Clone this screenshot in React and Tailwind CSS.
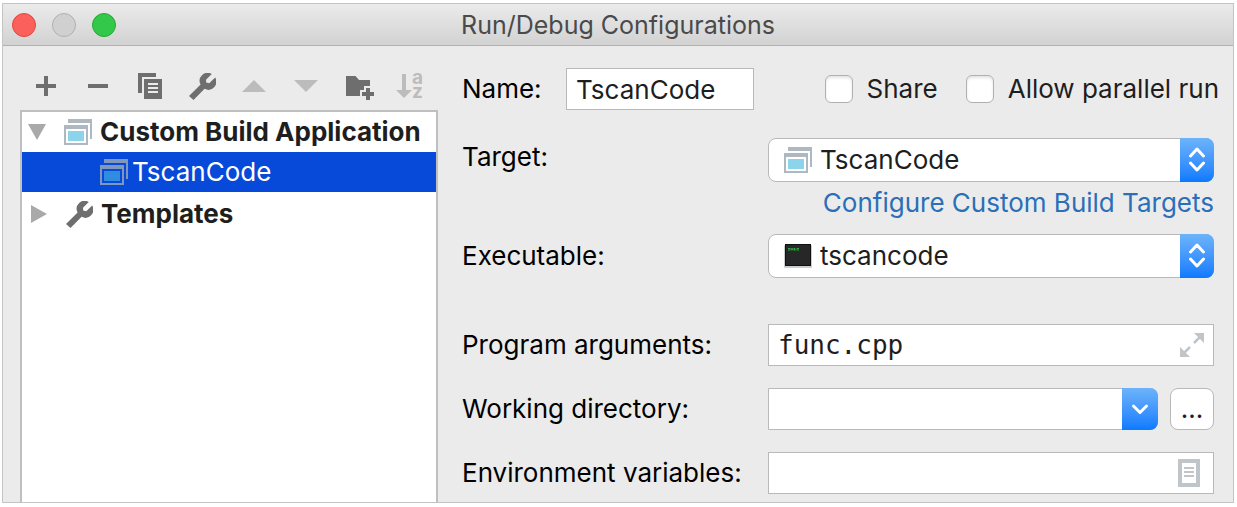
import React from "react";

function Wrench() {
  return (
    <svg width="27" height="27" viewBox="0 0 27 27" fill="#6e6e6e" aria-hidden="true">
      <path d="M0 23 L11.6 11.6 A8 8 0 0 1 22.8 1 L17 6.8 L17.2 9.6 L20.2 10.2 L26.2 4.6 A8 8 0 0 1 15.6 15.8 L4.5 27 Z" />
    </svg>
  );
}

function BuildIcon({ selected = false }) {
  const frame = selected ? "#7f96bd" : "#adb8c0";
  const fill = selected ? "#2f8ce0" : "#8cd3ec";
  return (
    <svg className="shrink-0" width="28" height="26" viewBox="0 0 28 26" aria-hidden="true">
      <path d="M4 0H28V20H26V4H4Z" fill={frame} />
      <path d="M0 6H24V26H0ZM2 10V24H22V10Z" fill={frame} fillRule="evenodd" />
      <rect x="4" y="12" width="16" height="10" fill={fill} />
    </svg>
  );
}

function TerminalIcon() {
  return (
    <svg className="shrink-0" width="28" height="26" viewBox="0 0 28 26" aria-hidden="true">
      <rect x="0" y="2" width="28" height="23" rx="1" fill="#c9ced1" />
      <rect x="1" y="1" width="26" height="22" fill="#101010" />
      <rect x="2" y="2" width="24" height="20" fill="#272727" />
      <path d="M4 5.5h2M4 7h2M7 5v2.500M9 5v2.500M7 6h2M10.500 5v2.500M12 5.500v2M13 5.500h2M13 7h2" stroke="#2fae46" strokeWidth="1" />
    </svg>
  );
}

const tools = [
  {
    label: "Add",
    icon: <svg width="20" height="20" fill="#6e6e6e"><path d="M8 0h4v8h8v4h-8v8H8v-8H0V8h8z" /></svg>,
  },
  {
    label: "Remove",
    icon: <svg width="20" height="20" fill="#6e6e6e"><path d="M0 8h20v4H0z" /></svg>,
  },
  {
    label: "Copy",
    icon: (
      <svg width="24" height="26" fill="#6e6e6e">
        <path d="M0 0H18V4H4V20H0Z" />
        <path d="M6 6H24V26H6ZM10 10V12H20V10ZM10 14V16H20V14ZM10 18V20H20V18Z" fillRule="evenodd" />
      </svg>
    ),
  },
  { label: "Edit templates", icon: <Wrench /> },
  {
    label: "Move up",
    icon: <svg width="24" height="12" fill="#bcbcbc"><path d="M12 0L24 12H0z" /></svg>,
  },
  {
    label: "Move down",
    icon: <svg width="24" height="12" fill="#bcbcbc"><path d="M0 0H24L12 12z" /></svg>,
  },
  {
    label: "New folder",
    icon: (
      <svg className="ml-1 mt-1" width="28" height="24" fill="#6e6e6e">
        <path d="M0 0H9.500L13 4H24V10H18V14H14V20H0Z" />
        <path d="M20 12h4v4h4v4h-4v4h-4v-4h-4v-4h4z" />
      </svg>
    ),
  },
  {
    label: "Sort",
    icon: (
      <svg className="overflow-visible" width="28" height="26" fill="#bcbcbc">
        <path d="M6 1h4v16h6L8 25 0 17h6z" />
        <text x="16" y="11" fontSize="19" fontWeight="700" fontFamily="Inter, sans-serif">a</text>
        <text x="16" y="25" fontSize="19" fontWeight="700" fontFamily="Inter, sans-serif">z</text>
      </svg>
    ),
  },
];

function Stepper() {
  return (
    <span className="pointer-events-none -my-px -mr-px flex w-[34px] shrink-0 items-center justify-center rounded-r-lg bg-linear-to-b from-[#6cb3fa] to-[#087aff]">
      <svg width="18" height="26" viewBox="0 0 18 26" fill="none" stroke="#fff" strokeWidth="3" strokeLinecap="round" strokeLinejoin="round" aria-hidden="true">
        <path d="M2.500 9L9 2L15.500 9M2.500 16L9 23L15.500 16" />
      </svg>
    </span>
  );
}

function Select({ id, icon, value }) {
  return (
    <div className="flex h-11 rounded-lg border border-[#b9b9b9] bg-white pl-[15px]">
      <span className="flex items-center">{icon}</span>
      <select id={id} className="min-w-0 flex-1 appearance-none bg-transparent pl-2 text-[#1e1e1e] outline-none">
        <option>{value}</option>
      </select>
      <Stepper />
    </div>
  );
}

const field = "h-[42px] border border-[#b9b9b9] bg-white text-[#1e1e1e] outline-none";
const row = "grid grid-cols-[306px_minmax(0,1fr)] items-center";

function Check({ label }) {
  return (
    <label className="flex items-center gap-[14px] whitespace-nowrap text-[#1e1e1e]">
      <input
        type="checkbox"
        className="size-7 shrink-0 appearance-none rounded-md border border-[#b0b0b0] bg-white shadow-[inset_0_2px_3px_#e4e4e4] checked:bg-[#2f8dfb]"
      />
      {label}
    </label>
  );
}

export default function App() {
  return (
    <main className="flex min-h-screen flex-col bg-white pt-[3px] pr-[3px] pb-1 pl-[2px] font-['Inter',sans-serif] text-[26px] leading-8 text-black">
      <section className="flex flex-1 flex-col border border-[#c4c4c4] bg-[#ebebeb]">
        <header className="grid h-[42px] grid-cols-[1fr_auto_1fr] items-center border-b border-[#b1b1b1] bg-linear-to-b from-[#ebebeb] to-[#d2d2d2] px-[9px]">
          <div className="flex gap-4">
            <button aria-label="Close" className="size-6 rounded-full border border-[#e2463f] bg-[#fc605c]" />
            <button aria-label="Minimize" className="size-6 rounded-full border border-[#b0b0b0] bg-[#d0d0d0]" />
            <button aria-label="Zoom" className="size-6 rounded-full border border-[#27a833] bg-[#34c84a]" />
          </div>
          <h1 className="text-[25px] text-[#4a4a4a]">Run/Debug Configurations</h1>
        </header>

        <div className="flex flex-1">
          <aside className="flex w-[435px] shrink-0 flex-col pt-4 pl-[17px]">
            <div className="flex h-12">
              {tools.map((t) => (
                <button key={t.label} aria-label={t.label} className="flex w-[52px] items-center justify-center">
                  {t.icon}
                </button>
              ))}
            </div>
            <ul className="flex-1 border-2 border-b-0 border-[#bfbfbf] bg-white font-bold whitespace-nowrap text-[#1e1e1e]">
              <li className="flex h-10 items-center pl-1.5">
                <svg className="mr-[18px]" width="18" height="16" fill="#a9a9a9" aria-hidden="true"><path d="M0 0H18L9 16z" /></svg>
                <BuildIcon />
                <span className="pl-2">Custom Build Application</span>
              </li>
              <li className="flex h-10 items-center bg-[#0749d9] pl-[78px] font-normal text-white">
                <BuildIcon selected />
                <span className="pl-1">TscanCode</span>
              </li>
              <li className="flex h-11 items-center pl-2">
                <svg className="mr-[18px]" width="18" height="18" fill="#a9a9a9" aria-hidden="true"><path d="M1 0L17 9L1 18z" /></svg>
                <Wrench />
                <span className="pl-2">Templates</span>
              </li>
            </ul>
          </aside>

          <form className="flex min-w-0 flex-1 flex-col pt-[22px] pb-2 pl-6">
            <div className="mb-7 flex items-center pr-[14px]">
              <label htmlFor="name" className="w-[104px]">Name:</label>
              <input id="name" defaultValue="TscanCode" className={`${field} w-[188px] px-[9px]`} />
              <div className="ml-auto flex gap-7">
                <Check label="Share" />
                <Check label="Allow parallel run" />
              </div>
            </div>

            <div className="pr-[19px]">
              <div className={row}>
                <label htmlFor="target" className="pb-1.5">Target:</label>
                <Select id="target" icon={<BuildIcon />} value="TscanCode" />
              </div>
              <div className="mb-2.5 flex h-[42px] items-center justify-end">
                <a href="#targets" className="text-[#2a6fb8]">Configure Custom Build Targets</a>
              </div>
              <div className={`${row} mb-[46px]`}>
                <label htmlFor="executable">Executable:</label>
                <Select id="executable" icon={<TerminalIcon />} value="tscancode" />
              </div>

              <div className="flex flex-col gap-[22px]">
                <div className={row}>
                  <label htmlFor="arguments">Program arguments:</label>
                  <div className={`${field} flex items-center pr-[9px]`}>
                    <input
                      id="arguments"
                      defaultValue="func.cpp"
                      className="min-w-0 flex-1 bg-transparent pl-[9px] font-['DejaVu_Sans_Mono',monospace] outline-none"
                    />
                    <button type="button" aria-label="Expand">
                      <svg width="24" height="24" fill="#c0c5c9" stroke="none">
                        <path d="M14 0H24V10Z" />
                        <path d="M0 14V24H10Z" />
                        <path d="M20 4L14 10M4 20L10 14" stroke="#c0c5c9" strokeWidth="2.500" />
                      </svg>
                    </button>
                  </div>
                </div>
                <div className={row}>
                  <label htmlFor="directory">Working directory:</label>
                  <div className="flex gap-3">
                    <div className={`${field} flex min-w-0 flex-1 rounded-r-lg`}>
                      <input id="directory" className="min-w-0 flex-1 bg-transparent px-[9px] outline-none" />
                      <button type="button" aria-label="Show history" className="-my-px -mr-px flex w-9 items-center justify-center rounded-r-lg bg-linear-to-b from-[#6cb3fa] to-[#087aff]">
                        <svg width="18" height="12" fill="none" stroke="#fff" strokeWidth="3" strokeLinecap="round" strokeLinejoin="round">
                          <path d="M2.500 3L9 9.500L15.500 3" />
                        </svg>
                      </button>
                    </div>
                    <button type="button" className="h-[42px] w-11 rounded-lg border border-[#b9b9b9] bg-white text-[#1e1e1e]">...</button>
                  </div>
                </div>
                <div className={row}>
                  <label htmlFor="environment">Environment variables:</label>
                  <div className={`${field} flex items-center pr-[13px]`}>
                    <input id="environment" className="min-w-0 flex-1 bg-transparent px-[9px] outline-none" />
                    <button type="button" aria-label="Edit variables">
                      <svg width="22" height="28" fill="#c0c5c9">
                        <path d="M0 0H22V28H0ZM4 4V24H18V4Z" fillRule="evenodd" />
                        <path d="M6 8h10v2H6zM6 12h10v2H6zM6 16h10v2H6z" />
                      </svg>
                    </button>
                  </div>
                </div>
              </div>
            </div>
          </form>
        </div>
      </section>
    </main>
  );
}
